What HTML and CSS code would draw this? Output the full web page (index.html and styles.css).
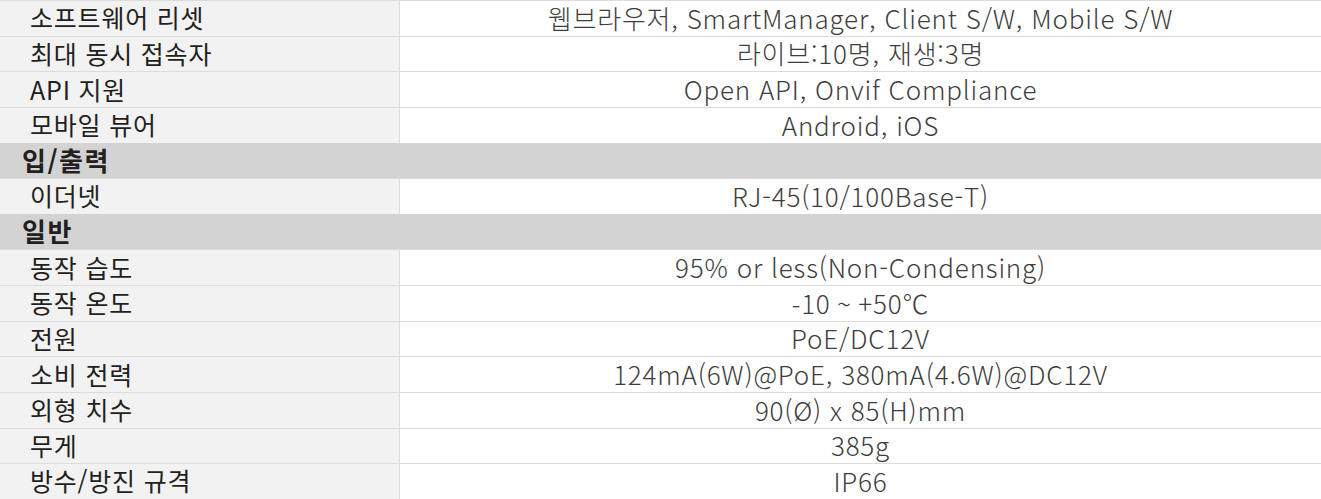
FILE: index.html
```html
<!DOCTYPE html>
<html lang="ko">
<head>
<meta charset="utf-8">
<title>사양</title>
<link rel="stylesheet" href="styles.css">
</head>
<body>
<div class="spec">
  <div class="row"><div class="label">소프트웨어 리셋</div><div class="value">웹브라우저, SmartManager, Client S/W, Mobile S/W</div></div>
  <div class="row"><div class="label">최대 동시 접속자</div><div class="value">라이브:10명, 재생:3명</div></div>
  <div class="row"><div class="label">API 지원</div><div class="value">Open API, Onvif Compliance</div></div>
  <div class="row"><div class="label">모바일 뷰어</div><div class="value">Android, iOS</div></div>
  <div class="section">입/출력</div>
  <div class="row"><div class="label">이더넷</div><div class="value">RJ-45(10/100Base-T)</div></div>
  <div class="section">일반</div>
  <div class="row"><div class="label">동작 습도</div><div class="value">95% or less(Non-Condensing)</div></div>
  <div class="row"><div class="label">동작 온도</div><div class="value">-10 ~ +50℃</div></div>
  <div class="row"><div class="label">전원</div><div class="value">PoE/DC12V</div></div>
  <div class="row"><div class="label">소비 전력</div><div class="value">124mA(6W)@PoE, 380mA(4.6W)@DC12V</div></div>
  <div class="row"><div class="label">외형 치수</div><div class="value">90(Ø) x 85(H)mm</div></div>
  <div class="row"><div class="label">무게</div><div class="value">385g</div></div>
  <div class="row"><div class="label">방수/방진 규격</div><div class="value">IP66</div></div>
</div>
</body>
</html>
```
FILE: styles.css
```css
html, body {
  margin: 0;
  padding: 0;
  background: #ffffff;
}

.spec {
  display: flex;
  flex-direction: column;
  width: 1321px;
  font-family: "Noto Sans CJK KR", "Noto Sans", sans-serif;
}

.row {
  display: flex;
  height: 35.64px;
  box-sizing: border-box;
  border-top: 1px solid #dcdcdc;
}

.label {
  width: 400px;
  flex: none;
  box-sizing: border-box;
  background: #f2f2f2;
  border-right: 1px solid #dcdcdc;
  padding: 0 0 2px 30px;
  font-size: 25px;
  letter-spacing: 0.8px;
  color: #231f20;
  display: flex;
  align-items: center;
  white-space: nowrap;
}

.value {
  flex: 1;
  display: flex;
  align-items: center;
  justify-content: center;
  padding-bottom: 2px;
  font-size: 26px;
  font-weight: 300;
  letter-spacing: 0.8px;
  color: #3d3d3d;
  white-space: nowrap;
}

.section {
  height: 35.64px;
  box-sizing: border-box;
  background: #d3d3d3;
  padding: 0 0 2px 22px;
  font-size: 26px;
  font-weight: bold;
  letter-spacing: 1.5px;
  color: #231f20;
  display: flex;
  align-items: center;
}
```
